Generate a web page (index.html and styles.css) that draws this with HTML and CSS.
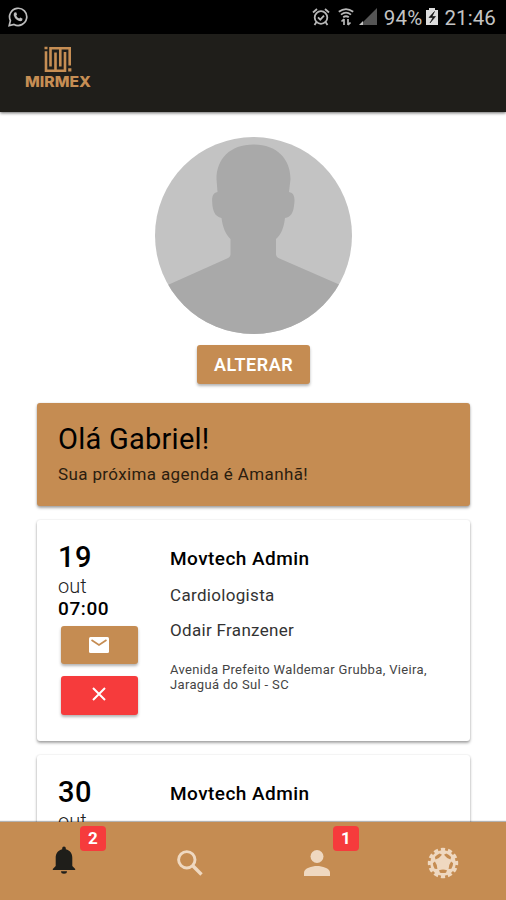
FILE: index.html
```html
<!DOCTYPE html>
<html lang="pt-BR">
<head>
<meta charset="utf-8">
<title>Mirmex</title>
<link rel="stylesheet" href="styles.css">
</head>
<body>
<div class="app">
  <div class="status">
    <svg class="whats" width="20" height="20" viewBox="0 0 20 20"><path d="M2.4 13.6A8.6 8.6 0 1 1 6 17.4L1.2 18.6Z" fill="none" stroke="#bdbdbd" stroke-width="1.7"/><path d="M6.8 5.2 8.4 5.5 9 7.7 8.2 8.8Q9.2 10.8 11.2 11.6L12.3 10.6 14.6 11.7Q14.6 14.2 12.2 14.2Q7.4 13.2 5.7 8.2Q5.5 6.1 6.8 5.2Z" fill="#bdbdbd"/></svg>
    <div class="indicators">
      <svg class="alarm" width="18" height="20" viewBox="0 0 18 20" fill="none" stroke="#b8b8b8" stroke-width="1.8"><circle cx="9" cy="10.5" r="6.3"/><path d="M1 5.500 5 2M13 2l4 3.500M4.500 15l-2 3M13.500 15l2 3M6 10.300l2.300 2.300 3.700-3.900"/></svg>
      <svg class="wifi" width="16" height="20" viewBox="0 0 16 20" fill="none" stroke="#b8b8b8" stroke-width="1.8"><path d="M.8 4.800Q8-.6 15.200 4.800M3 7.600Q8 3.800 13 7.600M5.200 10.200Q8 8.300 10.800 10.200"/><path d="M6 18V12M3.500 14.500 6 12M10 12v6M12.500 15.500 10 18" stroke-width="1.700"/></svg>
      <svg class="signal" width="19" height="20" viewBox="0 0 19 20"><path d="M18 1V18H4V15Z" fill="#555"/><path d="M0 18 4 14V18Z" fill="#c4c4c4"/></svg>
      <span class="percent">94%</span>
      <svg class="battery" width="14" height="20" viewBox="0 0 14 20"><path d="M1 3h3V1h6v2h3v15H1Z" fill="#ddd"/><path d="M9.5 4.5 4 10.5H8L5 16 10.5 9.5H7Z" fill="#111" stroke="#111" stroke-width=".6"/></svg>
      <span class="clock">21:46</span>
    </div>
  </div>
  <header class="header">
    <svg width="70" height="46" viewBox="0 0 70 46">
      <g fill="none" stroke="#c68e54" stroke-width="2.600"><path d="M22 7.200V26.700H41V8"/><path d="M26.500 22.500V4.300H45.700V21.500"/><path d="M31.500 8.500V26M36.300 4.300V22.500"/></g>
      <path d="M20.500 2.800h3v2.500h-3zM44.200 24.200h3.200v3.300h-3.200z" fill="#c68e54"/>
      <text class="wordmark" x="1" y="43" textLength="66" lengthAdjust="spacingAndGlyphs">MIRMEX</text>
    </svg>
  </header>
  <main class="content">
    <svg class="avatar" width="197" height="197" viewBox="0 0 197 197">
      <defs><clipPath id="round"><circle cx="98.5" cy="98.5" r="98.5"/></clipPath></defs>
      <g clip-path="url(#round)"><rect width="197" height="197" fill="#c3c3c3"/>
      <path d="M98.500 7.500C75 7.500 61.500 22 61.500 42L62.500 55C56 56 57 64 57.500 69C58.500 77 62 80 66.500 81C67.500 90 71 98 75.500 102V117Q75.500 120 72 121.500L15 147L0 153V197H197V153L183 147L124.500 121.500Q121 120 121 117V102C126 98 129 90 130 81C136 80 138 76 139 69C140 62 140 56 134 55L135.500 42C135.500 22 122 7.500 98.500 7.500Z" fill="#a9a9a9"/></g>
    </svg>
    <button class="btn change">ALTERAR</button>
    <section class="card greeting">
      <h1>Olá Gabriel!</h1>
      <p>Sua próxima agenda é Amanhã!</p>
    </section>
    <section class="card visit">
      <div class="when">
        <div class="day">19</div>
        <div class="month">out</div>
        <div class="hour">07:00</div>
        <button class="btn action"><svg width="20" height="16" viewBox="0 0 20 16"><rect width="20" height="16" rx="1.5" fill="#fff"/><path d="M2.500 3 10 8 17.500 3" fill="none" stroke="#c58c52" stroke-width="1.700"/></svg></button>
        <button class="btn action cancel"><svg width="14" height="14" viewBox="0 0 14 14"><path d="M1 1 13 13M13 1 1 13" stroke="#fff" stroke-width="2"/></svg></button>
      </div>
      <div class="info">
        <h2>Movtech Admin</h2>
        <p class="role">Cardiologista</p>
        <p class="role person">Odair Franzener</p>
        <p class="address">Avenida Prefeito Waldemar Grubba, Vieira,<br>Jaraguá do Sul - SC</p>
      </div>
    </section>
    <section class="card visit">
      <div class="when">
        <div class="day">30</div>
        <div class="month">out</div>
      </div>
      <div class="info"><h2>Movtech Admin</h2></div>
    </section>
  </main>
  <nav class="tabs">
    <a class="tab alerts"><svg width="24" height="28" viewBox="0 0 24 28" fill="#1f1e1a"><path d="M12 .5a1.800 1.800 0 0 1 1.800 1.800v1C18 4.300 20.300 7.500 20.300 12V20L23.200 23V24H.8V23L3.700 20V12C3.700 7.500 6 4.300 10.200 3.300v-1A1.800 1.800 0 0 1 12 .5ZM9 25.300h6a3 2.500 0 0 1-6 0Z"/></svg><span class="badge">2</span></a>
    <a class="tab"><svg width="26" height="26" viewBox="0 0 26 26" fill="none" stroke="#efd8c0"><circle cx="9.800" cy="9.800" r="8.200" stroke-width="2.900"/><path d="m15.800 15.800 8.700 8.700" stroke-width="3.400"/></svg></a>
    <a class="tab person-tab"><svg width="26" height="26" viewBox="0 0 26 26" fill="#efd8c0"><circle cx="13" cy="6.500" r="6.500"/><path d="M0 26V22.500C0 18.300 8 16 13 16s13 2.300 13 6.500V26Z"/></svg><span class="badge">1</span></a>
    <a class="tab person-tab"><svg width="32" height="32" viewBox="-16 -16 32 32"><circle r="12.700" fill="#efd8c0"/><circle r="13.500" fill="none" stroke="#efd8c0" stroke-width="3.400" pathLength="120" stroke-dasharray="6 4" stroke-dashoffset="3"/><g fill="#c58c52"><path id="slot" d="M-4 7.200Q0 5.800 4 7.200L3 9.700Q0 10.500-3 9.700Z"/><use href="#slot" transform="rotate(72)"/><use href="#slot" transform="rotate(144)"/><use href="#slot" transform="rotate(216)"/><use href="#slot" transform="rotate(288)"/></g></svg></a>
  </nav>
</div>
</body>
</html>
```
FILE: styles.css
```css
* { box-sizing: border-box; }
body { margin: 0; font-family: Roboto, "Liberation Sans", sans-serif; color: #000; background: #fff; }
h1, h2, p { margin: 0; font-weight: 400; white-space: nowrap; }
.app { width: 506px; height: 900px; overflow: hidden; display: flex; flex-direction: column; }
.status { height: 34px; flex: none; background: #000; color: #c4c4c4; display: flex; justify-content: space-between; align-items: center; padding: 0 10px 0 8px; }
.indicators { display: flex; align-items: center; font-size: 20.500px; line-height: 34px; }
.status span { padding-top: 2px; }
.alarm { margin-right: 8px; }
.wifi { margin-right: 5px; }
.signal { margin-right: 6px; }
.percent { letter-spacing: .2px; }
.clock { letter-spacing: .1px; }
.battery { margin: 0 5px 0 3px; }
.header { height: 78px; flex: none; background: #1f1e1a; padding: 8px 24px; box-shadow: 0 1px 3px rgba(0,0,0,.6); z-index: 1; margin-bottom: 25px; }
.header svg { display: block; margin-top: 2px; }
.wordmark { font: 800 15px Inter, Roboto, sans-serif; fill: #c68e54; }
.content { flex: 1; min-height: 0; overflow: hidden; display: flex; flex-direction: column; align-items: center; padding: 0 36px 0 37px; }
.content > * { flex: none; }
.avatar { display: block; }
.btn { border: 0; border-radius: 3px; background: #c58c52; color: #fff; display: flex; align-items: center; justify-content: center; padding: 0; box-shadow: 0 2px 3px rgba(0,0,0,.3); font-family: inherit; }
.change { width: 113px; height: 39px; margin: 11px 0 19px; font-size: 18px; font-weight: 600; letter-spacing: .5px; }
.card { width: 433px; border-radius: 3px; background: #fff; box-shadow: 0 2px 3px rgba(0,0,0,.35), 0 0 2px rgba(0,0,0,.12); }
.greeting { height: 103px; margin-bottom: 14px; background: #c58c52; padding: 18px 21px; }
.greeting h1 { font-size: 29px; line-height: 36px; letter-spacing: .25px; }
.greeting p { font-size: 17px; line-height: 20px; margin-top: 7px; color: #2b1d0f; letter-spacing: .37px; }
.visit { height: 221px; margin-bottom: 14px; display: flex; padding: 20px 21px; }
.when { width: 112px; }
.day { font-size: 29px; line-height: 34px; font-weight: 500; letter-spacing: .5px; }
.month { font-size: 20px; line-height: 24px; color: #222; font-weight: 300; }
.hour { font-size: 19px; line-height: 20px; font-weight: 500; letter-spacing: .6px; padding-top: 1px; height: 20px; }
.action { width: 77px; height: 38px; margin: 8px 0 0 3px; padding-right: 1px; }
.cancel { height: 39px; margin-top: 12px; background: #f63b3c; padding: 0 2px 3px 0; }
.info h2 { font-size: 19px; font-weight: 500; line-height: 24px; margin-top: 7px; letter-spacing: .45px; }
.role { font-size: 17px; line-height: 24px; margin-top: 12px; color: #333; letter-spacing: .32px; }
.person { margin-top: 11px; }
.address { font-size: 13px; line-height: 15px; margin-top: 20px; color: #444; letter-spacing: .34px; }
.tabs { height: 78px; flex: none; background: #c58c52; display: grid; grid-template-columns: repeat(4, 1fr); box-shadow: 0 -1px 1px rgba(0,0,0,.3); z-index: 1; }
.tab { position: relative; display: flex; align-items: center; justify-content: center; padding-top: 3px; }
.alerts { padding: 0 0 3px 1px; }
.person-tab { padding-left: 1px; }
.badge { position: absolute; left: 80px; top: 4px; width: 26px; height: 25px; border-radius: 4px; background: #f63b3c; color: #fff; font-size: 17px; line-height: 25px; font-weight: 700; text-align: center; }
```
